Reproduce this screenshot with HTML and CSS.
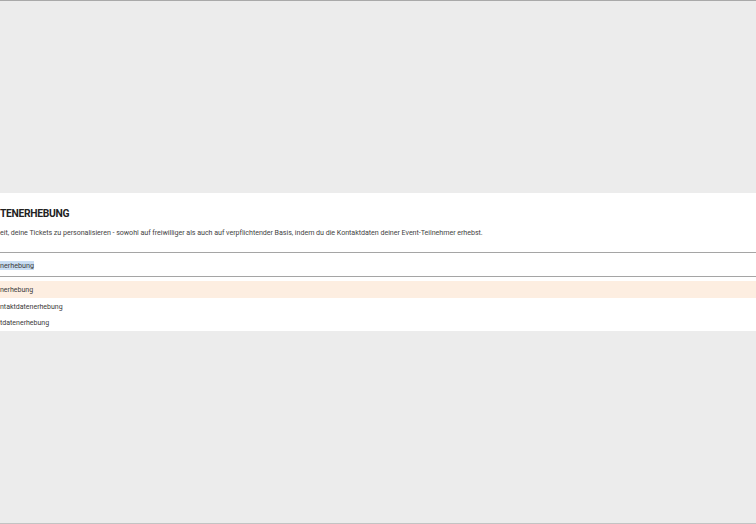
FILE: index.html
```html
<!DOCTYPE html>
<html lang="de">
<head>
<meta charset="utf-8">
<title>Kontaktdatenerhebung</title>
<link rel="stylesheet" href="styles.css">
</head>
<body>
<main class="stage">
  <section class="panel">
    <header class="panel-head">
      <h2 class="panel-title">TENERHEBUNG</h2>
      <p class="panel-desc">eit, deine Tickets zu personalisieren - sowohl auf freiwilliger als auch auf verpflichtender Basis, indem du die Kontaktdaten deiner Event-Teilnehmer erhebst.</p>
    </header>
    <div class="combo">
      <div class="combo-input"><span class="combo-value">nerhebung</span></div>
      <ul class="combo-list">
        <li class="combo-option is-active">nerhebung</li>
        <li class="combo-option">ntaktdatenerhebung</li>
        <li class="combo-option">tdatenerhebung</li>
      </ul>
    </div>
  </section>
</main>
</body>
</html>
```
FILE: styles.css
```css
* {
  box-sizing: border-box;
}

html, body {
  margin: 0;
  padding: 0;
}

body {
  height: 524px;
  overflow: hidden;
  background: #ececec;
  border-top: 1px solid #a9a9a9;
  border-bottom: 1px solid #c3c3c3;
  font-family: Roboto, "Liberation Sans", sans-serif;
  color: #333;
}

.stage {
  display: flex;
  flex-direction: column;
  padding-top: 192px;
}

.panel {
  background: #fff;
  height: 138px;
  display: flex;
  flex-direction: column;
}

.panel-head {
  padding: 13px 0 14px;
}

.panel-title {
  margin: 0;
  font-size: 10.3px;
  line-height: 16px;
  font-weight: 700;
  color: #222;
  letter-spacing: -0.3px;
}

.panel-desc {
  margin: 6px 0 0;
  font-size: 7.15px;
  line-height: 10px;
  color: #444;
  letter-spacing: -0.05px;
}

.combo-input {
  height: 25px;
  padding-top: 2px;
  border-top: 1px solid #a5a5a5;
  border-bottom: 1px solid #a5a5a5;
  display: flex;
  align-items: center;
  font-size: 7.2px;
  color: #3a3a3a;
}

.combo-value {
  background: #c9ddf2;
  line-height: 9px;
}

.combo-list {
  list-style: none;
  margin: 0;
  padding: 4px 0 0;
}

.combo-option {
  height: 16.5px;
  line-height: 16.5px;
  padding-top: 1px;
  font-size: 7px;
  color: #3a3a3a;
}

.combo-option.is-active {
  background: #fdeee1;
}
```
